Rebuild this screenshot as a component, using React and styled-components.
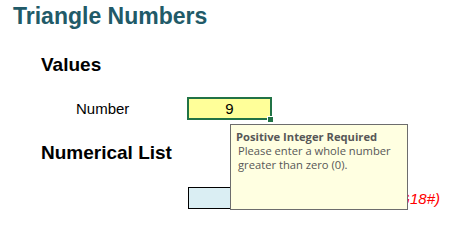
import React from "react";
import styled, { createGlobalStyle } from "styled-components";

const Global = createGlobalStyle`
  html, body { margin: 0; padding: 0; background: #ffffff; }
  body { font-family: "Liberation Sans", Arial, sans-serif; }
`;

const Sheet = styled.div`
  position: relative;
  width: 459px;
  height: 219px;
  overflow: hidden;
  background: #fff;
`;

const Title = styled.h1`
  margin: 0;
  padding: 3px 0 0 13px;
  font-size: 23px;
  line-height: 26px;
  font-weight: 700;
  color: #215a68;
`;

const Heading = styled.h2`
  margin: ${(p) => p.$top}px 0 0 41px;
  font-size: 19px;
  line-height: 22px;
  font-weight: 700;
  color: #000;
`;

const Row = styled.div`
  display: grid;
  grid-template-columns: 111px 85px 1fr;
  align-items: center;
  margin-top: ${(p) => p.$top}px;
  padding-left: 76px;
`;

const Label = styled.span`
  font-size: 15px;
  color: #000;
`;

const InputCell = styled.div`
  position: relative;
  box-sizing: border-box;
  height: 23px;
  border: 2px solid #217346;
  background: #ffff99;
  font-size: 15px;
  color: #000;
  text-align: center;
  line-height: 19px;
`;

const Handle = styled.span`
  position: absolute;
  right: -4px;
  bottom: -5px;
  width: 5px;
  height: 5px;
  background: #217346;
  border: 1px solid #fff;
`;

const ListCell = styled.div`
  box-sizing: border-box;
  height: 22px;
  margin-left: 1px;
  width: 84px;
  border: 1px solid #000;
  background: #daeef3;
`;

const Note = styled.span`
  font-size: 15px;
  font-style: italic;
  color: #ff0000;
  text-align: right;
  padding-right: 19px;
  white-space: nowrap;
`;

const Tooltip = styled.div`
  position: absolute;
  left: 230px;
  top: 124px;
  box-sizing: border-box;
  width: 178px;
  height: 86px;
  border: 1px solid #6d6d6d;
  background: #ffffe1;
  padding: 5px 0 0 5px;
  font-family: "Open Sans", "Noto Sans", sans-serif;
  color: #575757;
  white-space: nowrap;
`;

const TipTitle = styled.div`
  font-size: 11.2px;
  font-weight: 700;
  line-height: 14px;
`;

const TipBody = styled.div`
  font-size: 11.2px;
  line-height: 14px;
  padding-left: 2px;
`;

export default function App() {
  return (
    <>
      <Global />
      <Sheet>
        <Title>Triangle Numbers</Title>
        <Heading $top={25}>Values</Heading>
        <Row $top={21}>
          <Label>Number</Label>
          <InputCell>
            9
            <Handle />
          </InputCell>
        </Row>
        <Heading $top={22}>Numerical List</Heading>
        <Row $top={23}>
          <span />
          <ListCell />
          <Note>(=TRIANGLE(G18#)</Note>
        </Row>
        <Tooltip>
          <TipTitle>Positive Integer Required</TipTitle>
          <TipBody>
            Please enter a whole number
            <br />
            greater than zero (0).
          </TipBody>
        </Tooltip>
      </Sheet>
    </>
  );
}
